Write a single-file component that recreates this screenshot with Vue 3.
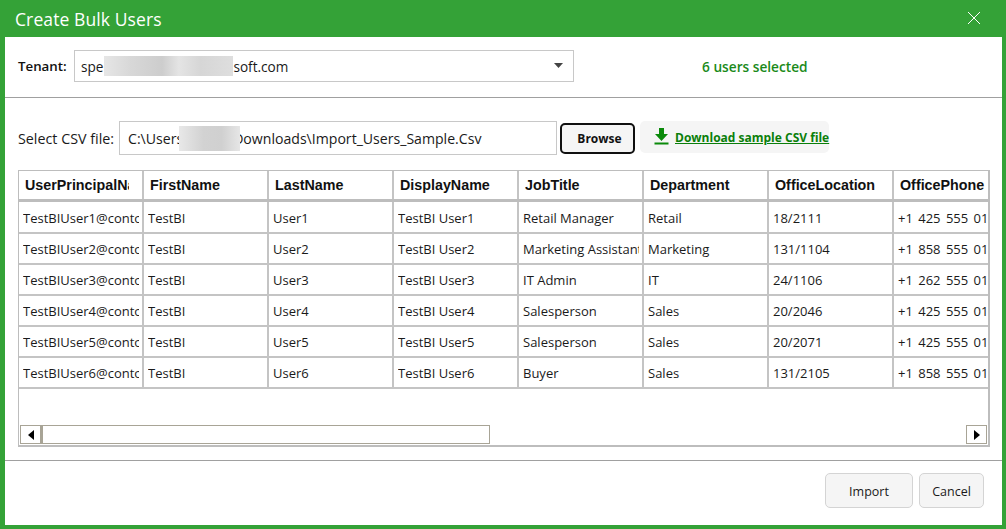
<script setup>
const columns = ['UserPrincipalName', 'FirstName', 'LastName', 'DisplayName', 'JobTitle', 'Department', 'OfficeLocation', 'OfficePhone']
const rows = [
  ['TestBIUser1@contoso.com', 'TestBI', 'User1', 'TestBI User1', 'Retail Manager', 'Retail', '18/2111', '+1 425 555 0100'],
  ['TestBIUser2@contoso.com', 'TestBI', 'User2', 'TestBI User2', 'Marketing Assistant', 'Marketing', '131/1104', '+1 858 555 0100'],
  ['TestBIUser3@contoso.com', 'TestBI', 'User3', 'TestBI User3', 'IT Admin', 'IT', '24/1106', '+1 262 555 0100'],
  ['TestBIUser4@contoso.com', 'TestBI', 'User4', 'TestBI User4', 'Salesperson', 'Sales', '20/2046', '+1 425 555 0100'],
  ['TestBIUser5@contoso.com', 'TestBI', 'User5', 'TestBI User5', 'Salesperson', 'Sales', '20/2071', '+1 425 555 0100'],
  ['TestBIUser6@contoso.com', 'TestBI', 'User6', 'TestBI User6', 'Buyer', 'Sales', '131/2105', '+1 858 555 0100'],
]
</script>

<template>
  <div class="window">
    <header class="titlebar">
      <span class="title">Create Bulk Users</span>
      <svg class="close" width="14" height="14" viewBox="0 0 14 14" aria-label="Close">
        <path d="M1 1 13 13M13 1 1 13" stroke="#fff" stroke-width="1" fill="none" />
      </svg>
    </header>

    <main class="body">
      <section class="tenant-row">
        <label class="tenant-label">Tenant:</label>
        <div class="combo">
          <span>spe</span><span class="smudge tenant-smudge"></span><span>soft.com</span>
          <svg class="caret" width="9" height="5" viewBox="0 0 9 5"><path d="M0 0h9L4.500 5z" fill="#444" /></svg>
        </div>
        <span class="selected">6 users selected</span>
      </section>

      <section class="file-row">
        <label class="file-label">Select CSV file:</label>
        <div class="file-input">
          <span>C:\Users</span><span class="smudge file-smudge"></span><span>Downloads\Import_Users_Sample.Csv</span>
        </div>
        <button class="browse">Browse</button>
        <a class="download">
          <svg width="15" height="17" viewBox="0 0 15 17">
            <path d="M5 0h5v6h4l-6.500 7L1 6h4z" fill="#0a8a0a" />
            <rect x="0.500" y="14.500" width="14" height="2" fill="#0a8a0a" />
          </svg>
          <span>Download sample CSV file</span>
        </a>
      </section>

      <section class="grid">
        <div class="row head">
          <div v-for="c in columns" :key="c" class="cell"><span class="clip">{{ c }}</span></div>
        </div>
        <div v-for="(r, i) in rows" :key="i" class="row data">
          <div v-for="(v, j) in r" :key="j" class="cell"><span class="clip">{{ v }}</span></div>
        </div>
        <div class="spacer"></div>
        <div class="scrollbar">
          <div class="sb-btn">
            <svg width="6" height="10" viewBox="0 0 6 10"><path d="M6 0v10L0 5z" fill="#000" /></svg>
          </div>
          <div class="thumb"></div>
          <div class="track"></div>
          <div class="sb-btn">
            <svg width="6" height="10" viewBox="0 0 6 10"><path d="M0 0v10l6-5z" fill="#000" /></svg>
          </div>
        </div>
      </section>

      <footer class="footer">
        <button class="action import">Import</button>
        <button class="action cancel">Cancel</button>
      </footer>
    </main>
  </div>
</template>

<style>
html, body { margin: 0; padding: 0; background: #fff; }
</style>

<style scoped>
.window {
  width: 1006px;
  height: 529px;
  box-sizing: border-box;
  border: solid #34a237;
  border-width: 0 4px 4px 5px;
  display: flex;
  flex-direction: column;
  font-family: "Open Sans", "Noto Sans", sans-serif;
  font-size: 13.500px;
  color: #1a1a1a;
  overflow: hidden;
}
.titlebar {
  height: 37px;
  flex: none;
  background: #34a237;
  margin: 0 -4px 0 -5px;
  padding: 0 25px 0 15px;
  display: flex;
  align-items: center;
  justify-content: space-between;
  color: #fff;
}
.title { font-size: 17.500px; letter-spacing: 0.1px; }
.close { margin-top: -1px; }
.body { flex: 1; display: flex; flex-direction: column; min-height: 0; }

.tenant-row {
  height: 61px;
  flex: none;
  box-sizing: border-box;
  border-bottom: 1px solid #a0a0a0;
  display: flex;
  align-items: flex-start;
  padding: 13px 0 0 13px;
}
.tenant-label { font-weight: 600; width: 56px; line-height: 32px; flex: none; color: #111; font-size: 13.300px; }
.combo {
  width: 500px;
  height: 32px;
  flex: none;
  box-sizing: border-box;
  border: 1px solid #c8c8c8;
  display: flex;
  align-items: center;
  padding-left: 6px;
  font-size: 13.600px;
  position: relative;
}
.caret { position: absolute; right: 10px; top: 12px; }
.selected {
  margin-left: 128px;
  line-height: 33px;
  font-weight: 600;
  color: #1a8a1a;
  font-size: 13.700px;
}
.smudge {
  display: block;
  flex: none;
  background: #e2e2e2;
  position: relative;
  z-index: 1;
}
.tenant-smudge {
  width: 129px;
  height: 20px;
  margin-left: 1px;
  background: linear-gradient(90deg, #e6e6e6 0%, #d8d8d8 20%, #cdcdcd 45%, #e4e4e4 58%, #d6d6d6 75%, #dedede 100%);
}
.file-smudge {
  width: 61px;
  height: 25px;
  margin: 0 -7px 0 -4px;
  background: linear-gradient(90deg, #e8e8e8 0%, #d2d2d2 40%, #d0d0d0 70%, #e6e6e6 100%);
}

.file-row {
  height: 72px;
  flex: none;
  display: flex;
  align-items: flex-start;
  padding: 23px 0 0 13px;
  box-sizing: border-box;
}
.file-label { width: 101px; flex: none; line-height: 35px; font-size: 14.300px; white-space: nowrap; }
.file-input {
  width: 438px;
  height: 34px;
  flex: none;
  box-sizing: border-box;
  border: 1px solid #c8c8c8;
  display: flex;
  align-items: center;
  padding-left: 8px;
  font-size: 14.100px;
  overflow: hidden;
  white-space: nowrap;
}
.browse {
  width: 75px;
  height: 31px;
  margin: 2px 0 0 3px;
  flex: none;
  box-sizing: border-box;
  border: 2px solid #111;
  border-radius: 5px;
  background: #f5f5f5;
  font: 700 12px "Open Sans", sans-serif;
  color: #111;
  padding: 0 0 0 4px;
}
.download {
  width: 189px;
  height: 32px;
  margin: 0 0 0 5px;
  flex: none;
  box-sizing: border-box;
  background: #f5f5f5;
  border-radius: 5px;
  display: flex;
  align-items: center;
  padding-left: 14px;
  gap: 6px;
  color: #0a7f0a;
  font-weight: 700;
  font-size: 12px;
  white-space: nowrap;
  text-decoration: underline;
}
.download svg { flex: none; margin-top: -1px; }

.grid {
  margin: 0 0 0 13px;
  width: 972px;
  height: 277px;
  flex: none;
  box-sizing: border-box;
  border: 1px solid #bdbdbd;
  border-width: 1px 2px 2px 1px;
  display: flex;
  flex-direction: column;
  overflow: hidden;
  background: #fff;
}
.row { display: grid; grid-template-columns: repeat(8, 125px); flex: none; box-sizing: border-box; }
.cell {
  box-sizing: border-box;
  border-right: 2px solid #c4c4c4;
  overflow: hidden;
  white-space: nowrap;
  display: flex;
  align-items: center;
}
.cell:nth-child(8) { border-right: 0; }
.clip { display: block; overflow: hidden; width: 100%; }
.head {
  height: 31px;
  border-bottom: 3px solid #bdbdbd;
  font-family: "Liberation Sans", Arial, sans-serif;
  font-weight: 700;
  font-size: 14.300px;
  color: #111;
}
.head .cell { padding: 0 13px 0 6px; }
.head .cell:nth-child(8) { padding-right: 0; }
.data {
  height: 31px;
  border-bottom: 2px solid #c4c4c4;
  font-family: "Open Sans", sans-serif;
  font-size: 13px;
}
.head + .data { height: 32px; }
.data .cell { padding: 1px 3px 0 4px; }
.data .cell:nth-child(8) { padding-right: 1px; word-spacing: 2px; }
.spacer { flex: 1; }
.scrollbar {
  height: 19px;
  flex: none;
  margin: 0 1px 1px 1px;
  display: flex;
}
.sb-btn {
  width: 21px;
  box-sizing: border-box;
  border: 1px solid #a8a496;
  flex: none;
  display: flex;
  align-items: center;
  justify-content: center;
  background: #fff;
}
.thumb {
  width: 449px;
  flex: none;
  box-sizing: border-box;
  border: 1px solid #a8a496;
  border-left-width: 2px;
  background: #fff;
}
.track { flex: 1; }

.footer {
  flex: 1;
  margin-top: 13px;
  border-top: 1px solid #a0a0a0;
  display: flex;
  justify-content: flex-end;
  padding: 12px 18px 0 0;
  gap: 6px;
}
.action {
  height: 35px;
  box-sizing: border-box;
  border: 1px solid #d4d4d4;
  border-radius: 5px;
  background: #f5f5f5;
  font: 12.500px "Open Sans", sans-serif;
  color: #1a1a1a;
  padding: 2px 0 0;
}
.import { width: 88px; }
.cancel { width: 65px; }
</style>
